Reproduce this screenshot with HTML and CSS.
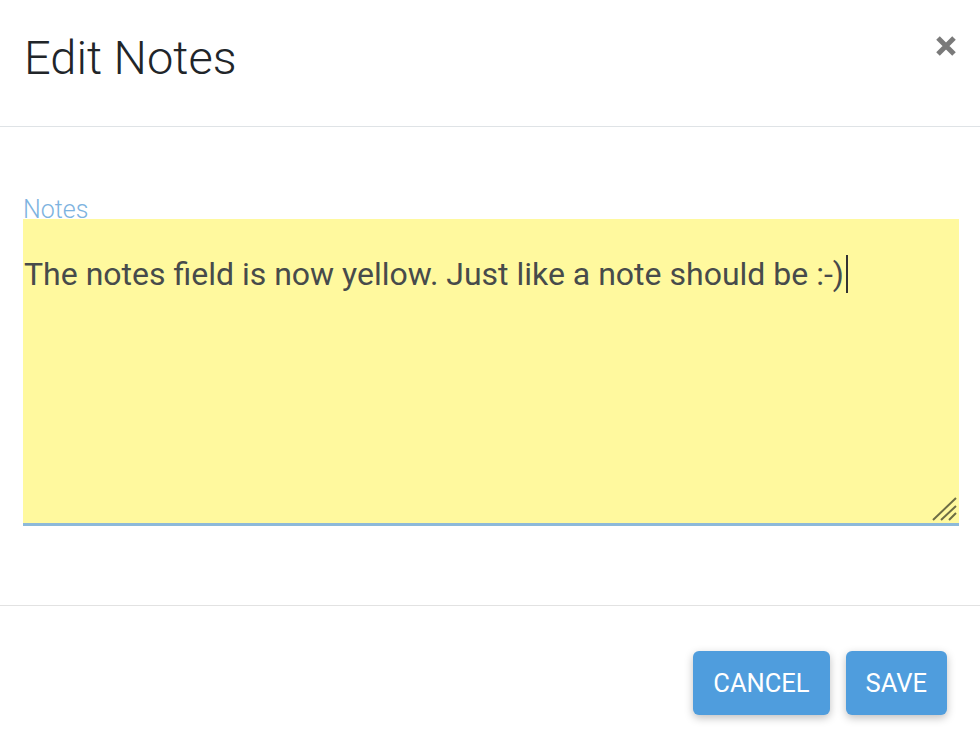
FILE: index.html
```html
<!DOCTYPE html>
<html lang="en">
<head>
    <meta charset="UTF-8">
    <meta name="viewport" content="width=device-width, initial-scale=1.0">
    <title>Edit Notes</title>
    <link rel="stylesheet" href="styles.css">
</head>
<body>
    <div class="modal">
        <!-- Cabeçalho -->
        <div class="modal-header">
            <h2 class="modal-title">Edit Notes</h2>
            <button type="button" class="close-btn" aria-label="Close">
                <svg width="24" height="24" viewBox="0 0 24 24">
                    <path d="M4 4 L20 20 M20 4 L4 20" stroke="#7a7a7a" stroke-width="5" stroke-linecap="butt"/>
                </svg>
            </button>
        </div>

        <!-- Campo de notas -->
        <div class="modal-body">
            <label class="field-label" for="notes">Notes</label>
            <div class="notes-field" id="notes" role="textbox">The notes field is now yellow. Just like a note should be :-)<span class="caret"></span>
                <svg class="grip" width="26" height="24" viewBox="0 0 26 24">
                    <path d="M1 23 L24 1 M9 23 L24 9 M17 23 L24 16" stroke="#6e6e45" stroke-width="2"/>
                </svg>
            </div>
        </div>

        <!-- Botões -->
        <div class="modal-footer">
            <button type="button" class="btn">CANCEL</button>
            <button type="button" class="btn">SAVE</button>
        </div>
    </div>
</body>
</html>
```

FILE: styles.css
```css
body {
    margin: 0;
    font-family: Roboto, 'Liberation Sans', Arial, sans-serif;
    background-color: #fff;
}
.modal {
    width: 980px;
    height: 734px;
    overflow: hidden;
}
.modal-header {
    display: flex;
    justify-content: space-between;
    align-items: flex-start;
    height: 127px;
    box-sizing: border-box;
    padding: 30px 22px 0 24px;
    border-bottom: 1px solid #dfe3e6;
}
.modal-title {
    margin: 0;
    font-size: 47px;
    font-weight: 300;
    line-height: 1.2;
    color: #212529;
}
.close-btn {
    margin-top: 4px;
    padding: 0;
    border: none;
    background: none;
    cursor: pointer;
}
.modal-body {
    padding: 71px 21px 79px 23px;
    border-bottom: 1px solid #e2e2e2;
}
.field-label {
    display: block;
    padding-top: 2px;
    font-size: 25px;
    font-weight: 300;
    line-height: 19px;
    color: #7db3e0;
}
.notes-field {
    position: relative;
    height: 307px;
    box-sizing: border-box;
    padding: 31px 0 0 1px;
    background-color: #fff99e;
    border-bottom: 3px solid #8db9d9;
    font-size: 32px;
    line-height: 1.5;
    color: #474b4b;
}
.caret {
    display: inline-block;
    width: 2px;
    height: 38px;
    margin-left: 2px;
    vertical-align: -8px;
    background-color: #333;
}
.grip {
    position: absolute;
    right: 1px;
    bottom: 2px;
}
.modal-footer {
    display: flex;
    justify-content: flex-end;
    gap: 16px;
    padding: 45px 33px 0 0;
}
.btn {
    height: 64px;
    padding: 0 20px;
    font-family: inherit;
    font-size: 25.5px;
    color: #fff;
    background-color: #4f9ddd;
    border: none;
    border-radius: 6px;
    box-shadow: 0 3px 8px rgba(0, 0, 0, 0.25);
    cursor: pointer;
}
```
